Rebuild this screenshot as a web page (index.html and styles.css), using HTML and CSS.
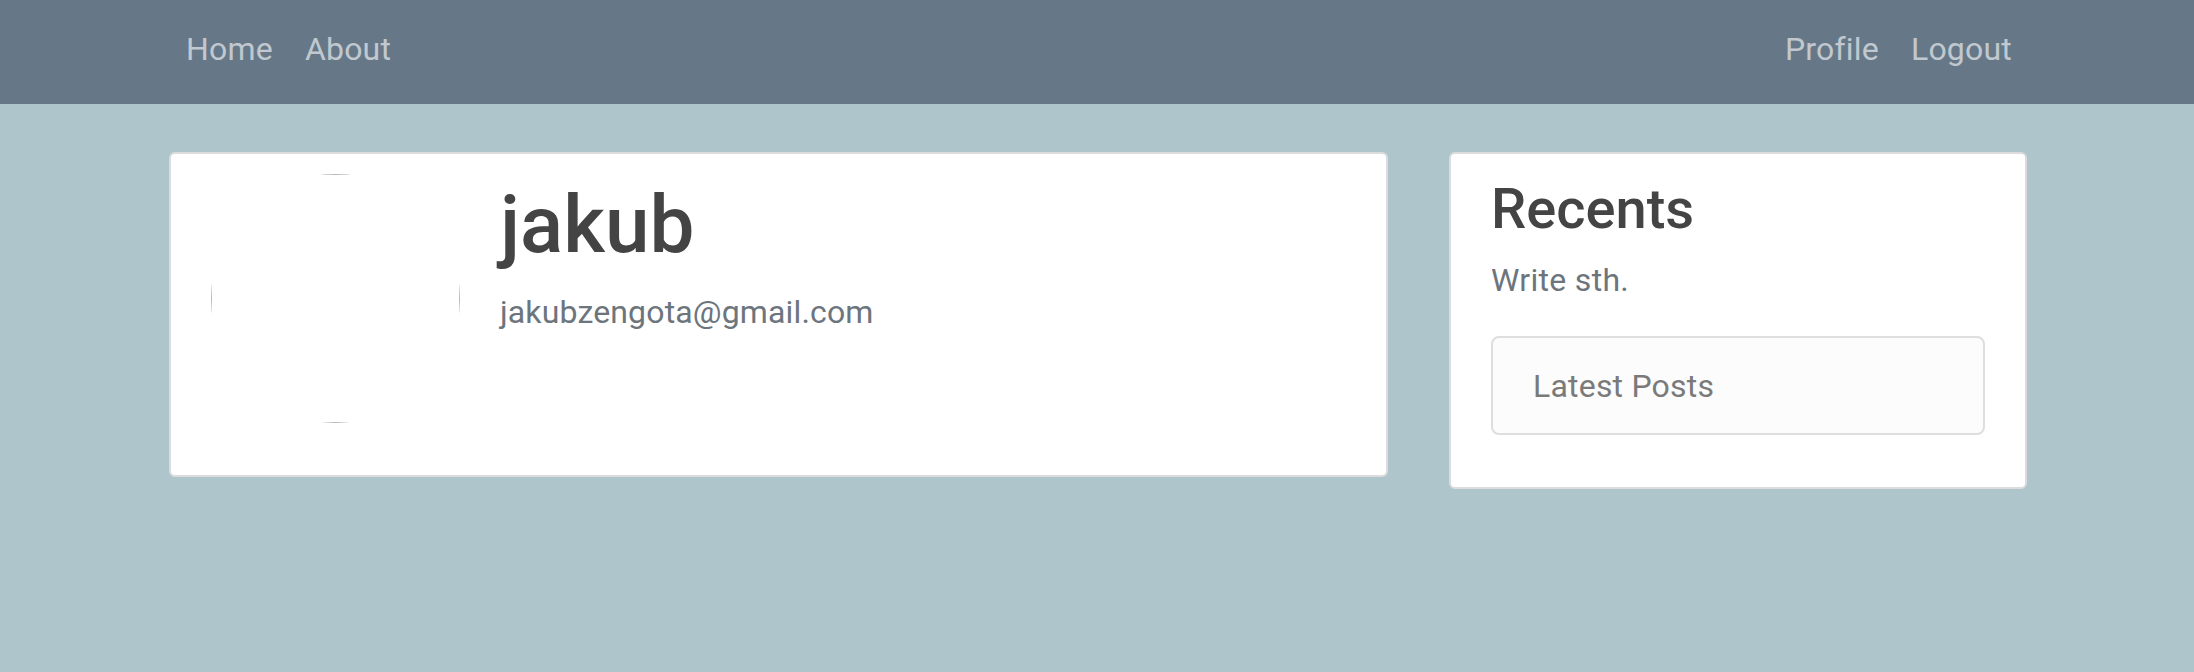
FILE: index.html
```html
<!DOCTYPE html>
<html lang="en">
<head>
<meta charset="utf-8">
<title>jakub</title>
<link rel="stylesheet" href="styles.css">
</head>
<body>
<nav class="navbar">
  <div class="nav-inner">
    <ul class="nav-list">
      <li><a class="nav-link" href="#">Home</a></li>
      <li><a class="nav-link" href="#">About</a></li>
    </ul>
    <ul class="nav-list">
      <li><a class="nav-link" href="#">Profile</a></li>
      <li><a class="nav-link" href="#">Logout</a></li>
    </ul>
  </div>
</nav>
<main class="container">
  <section class="card profile-card">
    <div class="avatar"><div class="avatar-img"></div></div>
    <div class="profile-info">
      <h1 class="username">jakub</h1>
      <p class="email">jakubzengota@gmail.com</p>
    </div>
  </section>
  <aside class="card side-card">
    <h3 class="side-title">Recents</h3>
    <p class="side-text">Write sth.</p>
    <div class="latest">Latest Posts</div>
  </aside>
</main>
</body>
</html>
```
FILE: styles.css
```css
* { box-sizing: border-box; }
html, body { margin: 0; padding: 0; }
body {
  background: #adc5cb;
  font-family: Roboto, "Liberation Sans", Arial, sans-serif;
  min-height: 672px;
}
.navbar {
  background: #667888;
  height: 104px;
}
.nav-inner {
  width: 1862px;
  margin: 0 auto;
  display: flex;
  justify-content: space-between;
  padding: 25px 0 0 4px;
}
.nav-list {
  list-style: none;
  margin: 0;
  padding: 0;
  display: flex;
}
.nav-link {
  display: block;
  padding: 0 16px;
  font-size: 32px;
  line-height: 48px;
  letter-spacing: 0.2px;
  color: #c1c8cf;
  text-decoration: none;
}
.container {
  width: 1860px;
  margin: 48px auto 0;
  padding-left: 2px;
  display: grid;
  grid-template-columns: 1219px 578px;
  column-gap: 61px;
  align-items: start;
}
.card {
  background: #fff;
  border: 2px solid #dcdcdc;
  border-radius: 6px;
}
.profile-card {
  display: flex;
  align-items: flex-start;
  padding: 20px 40px 32px 40px;
  min-height: 325px;
}
.avatar {
  width: 249px;
  height: 249px;
  border-radius: 50%;
  overflow: hidden;
  flex: none;
  margin-right: 40px;
}
.avatar-img {
  width: 100%;
  height: 100%;
  border: 1px solid #b8b8b8;
  background: #fff;
}
.profile-info { padding-top: 3px; }
.username {
  margin: 0 0 15px;
  font-size: 80px;
  font-weight: 500;
  line-height: 96px;
  color: #444;
}
.email {
  margin: 0;
  font-size: 32px;
  line-height: 48px;
  letter-spacing: 0.15px;
  color: #6c757d;
}
.side-card {
  padding: 22px 40px 20px 40px;
}
.side-title {
  margin: 0 0 13px;
  font-size: 56px;
  font-weight: 500;
  line-height: 67px;
  color: #444;
}
.side-text {
  margin: 0 0 32px;
  font-size: 32px;
  line-height: 48px;
  letter-spacing: 0.3px;
  color: #6c757d;
}
.latest {
  background: #fcfcfc;
  border: 2px solid #dedede;
  border-radius: 8px;
  padding: 24px 40px 23px;
  font-size: 32px;
  line-height: 48px;
  letter-spacing: 0.2px;
  color: #7a7a7a;
  margin-bottom: 32px;
}
```
